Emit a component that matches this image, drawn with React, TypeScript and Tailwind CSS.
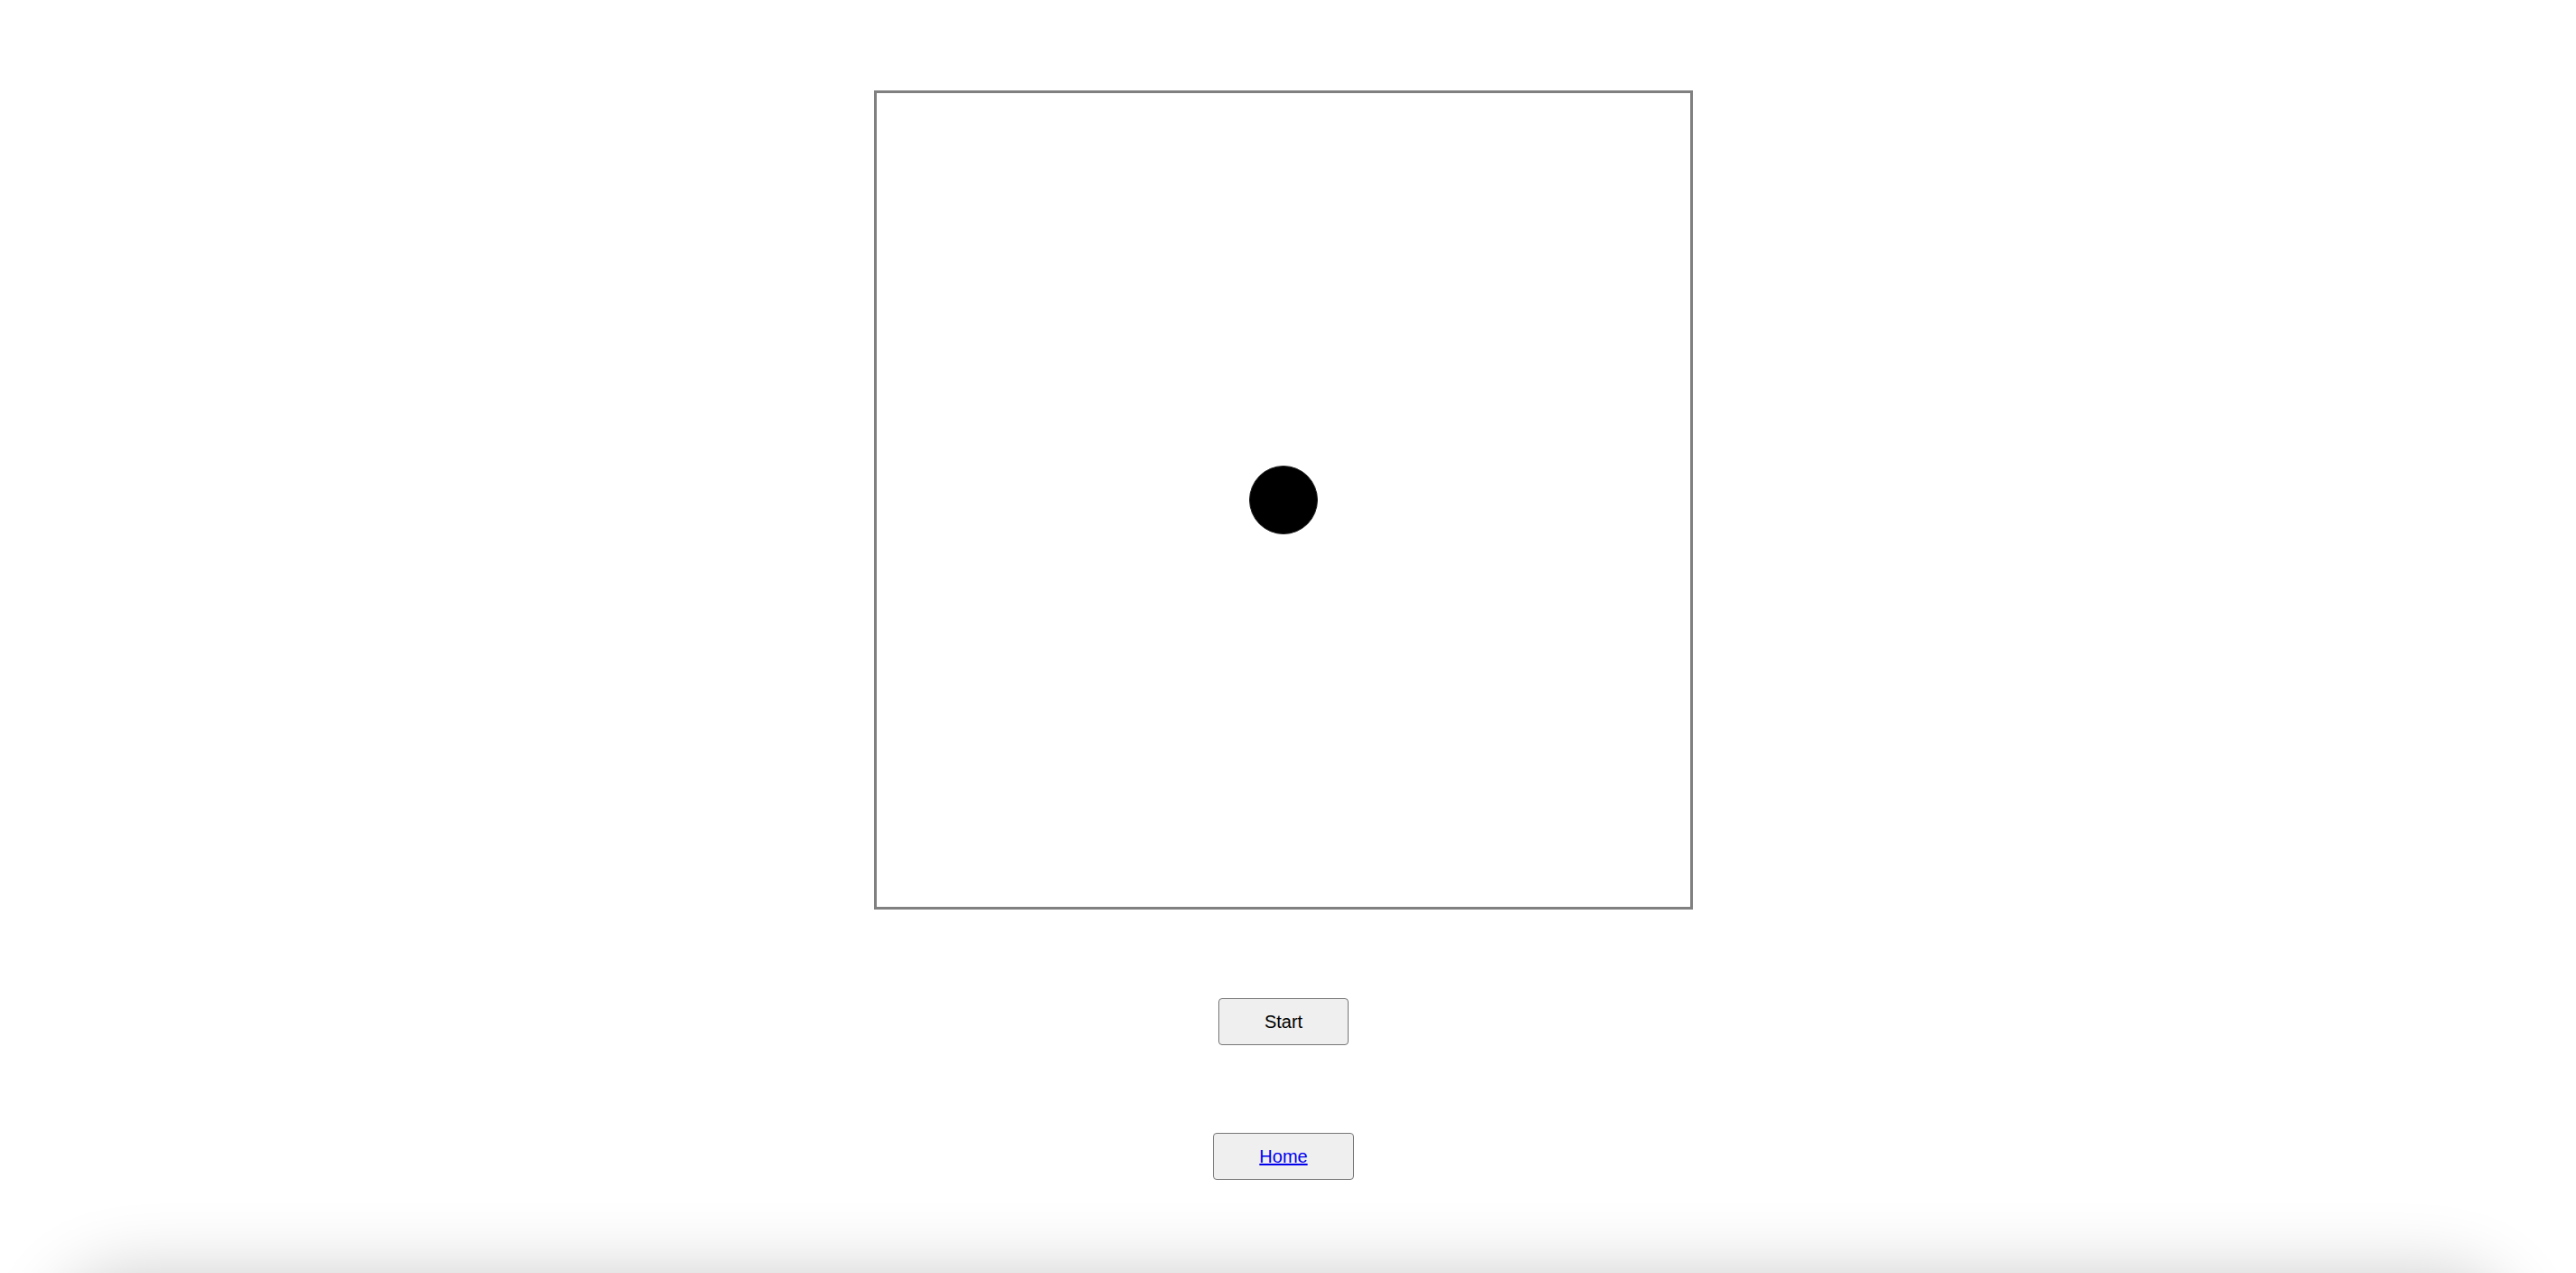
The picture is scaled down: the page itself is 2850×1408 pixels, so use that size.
import React from "react";

export default function App() {
  return (
    <div className="h-[1408px] bg-white flex flex-col items-center pt-[100px] pr-[10px] overflow-hidden" style={{ fontFamily: '"Liberation Sans", Arial, sans-serif' }}>
      <div className="w-[906px] h-[906px] shrink-0 border-[3px] border-[#808080] flex items-center justify-center">
        <div className="w-[76px] h-[76px] rounded-full bg-black border border-[#222]" />
      </div>
      <button className="mt-[98px] h-[52px] shrink-0 px-[50px] bg-[#efefef] border border-[#767676] rounded-[4px] text-[20px] text-black leading-none">
        Start
      </button>
      <button className="mt-[97px] h-[52px] shrink-0 px-[50px] bg-[#efefef] border border-[#767676] rounded-[4px] text-[20px] leading-none">
        <a href="#" className="text-[#0000ee] underline">Home</a>
      </button>
      <div className="mt-[103px] shrink-0 self-stretch mx-[60px] h-[200px] bg-white rounded-t-[80px] shadow-[0_0_80px_rgba(0,0,0,0.2)]" />
    </div>
  );
}
